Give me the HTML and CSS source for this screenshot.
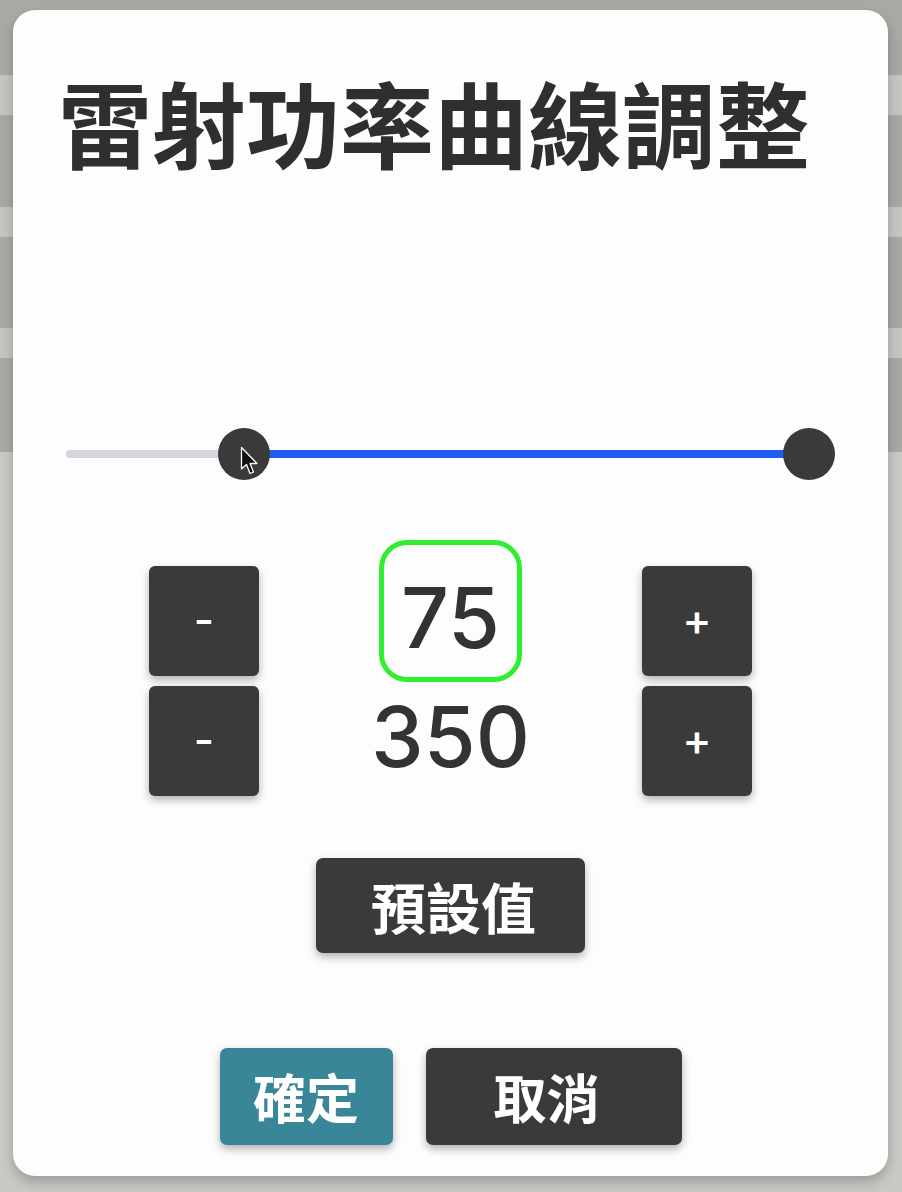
FILE: index.html
```html
<!DOCTYPE html>
<html lang="zh-Hant">
<head>
    <meta charset="UTF-8">
    <meta name="viewport" content="width=device-width, initial-scale=1.0">
    <title>雷射功率曲線調整</title>
    <link rel="stylesheet" href="styles.css">
</head>
<body>
    <div class="dialog">
        <h1 class="title">雷射功率曲線調整</h1>

        <!-- 範圍 0 ~ 350，目前 75 ~ 350 -->
        <div class="range">
            <div class="range-track"></div>
            <div class="range-fill" style="left: calc(26px + (100% - 52px) * 0.2116);"></div>
            <div class="range-thumb" style="left: calc(26px + (100% - 52px) * 0.2116);">
                <svg class="cursor" width="20" height="30" viewBox="0 0 20 30">
                    <path d="M1.5 1.5 L1.5 23 L6.5 18.5 L10 27.5 L13.5 26 L10 17.5 L17 17.5 Z" fill="#111" stroke="#fff" stroke-width="1.3" stroke-linejoin="round"/>
                </svg>
            </div>
            <div class="range-thumb" style="left: calc(26px + (100% - 52px) * 1);"></div>
        </div>

        <div class="steppers">
            <div class="step-col">
                <button class="step-btn">-</button>
                <button class="step-btn">-</button>
            </div>
            <div class="values">
                <div class="value value-active">75</div>
                <div class="value">350</div>
            </div>
            <div class="step-col">
                <button class="step-btn">+</button>
                <button class="step-btn">+</button>
            </div>
        </div>

        <button class="btn btn-preset">預設值</button>

        <div class="actions">
            <button class="btn btn-ok">確定</button>
            <button class="btn btn-cancel">取消</button>
        </div>
    </div>
</body>
</html>
```

FILE: styles.css
```css
body {
    margin: 0;
    height: 1192px;
    overflow: hidden;
    background: linear-gradient(to bottom,
        #a9a8a5 0, #a9a8a5 75px,
        #c6c5c1 75px, #c6c5c1 115px,
        #a9a8a5 115px, #a9a8a5 207px,
        #c6c5c1 207px, #c6c5c1 237px,
        #a9a8a5 237px, #a9a8a5 328px,
        #c6c5c1 328px, #c6c5c1 358px,
        #a9a8a5 358px, #a9a8a5 452px,
        #c9c8c4 452px, #c9c8c4 100%);
    font-family: "Noto Sans CJK TC", sans-serif;
}
.dialog {
    box-sizing: border-box;
    width: 875px;
    height: 1166px;
    margin: 10px 0 0 13px;
    padding: 64px 53px 0;
    background-color: #fdfdfd;
    border-radius: 22px;
    box-shadow: 0 6px 12px rgba(0, 0, 0, 0.22);
    display: flex;
    flex-direction: column;
    align-items: center;
}
.title {
    align-self: flex-start;
    margin: 0 0 0 -8px;
    font-size: 94px;
    line-height: 1;
    font-weight: 700;
    color: #2f2f2f;
    white-space: nowrap;
}

/* 雙滑桿 */
.range {
    position: relative;
    align-self: stretch;
    height: 52px;
    margin-top: 260px;
}
.range-track {
    position: absolute;
    left: 0;
    right: 0;
    top: 22px;
    height: 8px;
    border-radius: 4px;
    background-color: #d6d6de;
}
.range-fill {
    position: absolute;
    right: 26px;
    top: 22px;
    height: 8px;
    background-color: #1f5cf2;
}
.range-thumb {
    position: absolute;
    top: 0;
    width: 52px;
    height: 52px;
    margin-left: -26px;
    border-radius: 50%;
    background-color: #3a3a3a;
}
.cursor {
    position: absolute;
    left: 22px;
    top: 18px;
}

/* 數值調整 */
.steppers {
    display: flex;
    align-items: flex-start;
    gap: 120px;
    margin-top: 60px;
}
.step-col {
    display: flex;
    flex-direction: column;
    gap: 10px;
    margin-top: 26px;
}
.step-btn {
    width: 110px;
    height: 110px;
    padding: 0 0 2px;
    border: none;
    border-radius: 6px;
    background-color: #3a3a3a;
    color: #fff;
    font-family: Inter, sans-serif;
    font-size: 44px;
    font-weight: 500;
    line-height: 1;
    box-shadow: 0 4px 8px rgba(0, 0, 0, 0.3);
}
.values {
    width: 143px;
    display: flex;
    flex-direction: column;
    align-items: center;
}
.value {
    font-family: Inter, sans-serif;
    font-size: 84px;
    line-height: 1;
    font-weight: 500;
    color: #333;
    margin-top: 13px;
    white-space: nowrap;
}
.value-active {
    box-sizing: border-box;
    width: 143px;
    height: 142px;
    margin-top: 0;
    padding-top: 31px;
    text-align: center;
    border: 5px solid #30ee30;
    border-radius: 28px;
}

/* 下方按鈕 */
.btn {
    border: none;
    border-radius: 7px;
    padding: 0;
    color: #fff;
    font-family: "Noto Sans CJK TC", sans-serif;
    font-weight: 700;
    line-height: 1;
    box-shadow: 0 4px 9px rgba(0, 0, 0, 0.3);
}
.btn-preset {
    width: 269px;
    height: 95px;
    margin-top: 62px;
    padding-left: 6px;
    font-size: 55px;
    background-color: #3a3a3a;
}
.actions {
    display: flex;
    gap: 33px;
    margin-top: 95px;
}
.btn-ok,
.btn-cancel {
    height: 97px;
    font-size: 53px;
}
.btn-ok {
    width: 173px;
    background-color: #3a8699;
}
.btn-cancel {
    width: 256px;
    padding-right: 14px;
    background-color: #3a3a3a;
}
```
